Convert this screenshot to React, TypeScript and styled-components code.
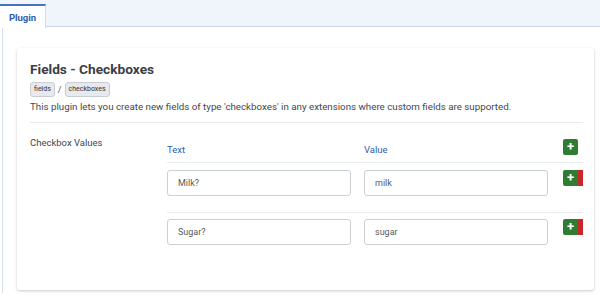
import styled, { createGlobalStyle } from 'styled-components'

let Global = createGlobalStyle`
    body {
        margin: 0;
        background: #fff;
        font-family: Roboto, "Liberation Sans", sans-serif;
        color: #3a3f44;
    }
`

let TabBar = styled.div`
    display: flex;
    height: 27px;
    padding-top: 4px;
    box-sizing: border-box;
    background: #f0f4fb;
    border-bottom: 1px solid #cbd6e8;
`

let Tab = styled.div`
    width: 46px;
    height: 24px;
    box-sizing: border-box;
    background: #fff;
    border-top: 2px solid #4673c4;
    border-right: 1px solid #d3dcea;
    display: flex;
    align-items: center;
    justify-content: center;
    font-size: 9.5px;
    font-weight: 700;
    color: #2c5cb0;
`

let Panel = styled.div`
    margin-left: 2px;
    border-left: 1px solid #d5deec;
    padding: 21px 6px 3px 14px;
`

let Card = styled.div`
    height: 242px;
    box-sizing: border-box;
    background: #fff;
    border-radius: 3px;
    box-shadow: 0 1px 3px rgba(0, 0, 0, 0.22);
    padding: 11px 11px 0 13px;
`

let Title = styled.h2`
    margin: 0;
    font-size: 13.7px;
    line-height: 20px;
    font-weight: 700;
    color: #3b4046;
`

let Badges = styled.div`
    display: flex;
    align-items: center;
    gap: 3px;
    margin-top: 3px;
    font-size: 9px;
    color: #555;
`

let Badge = styled.span`
    display: inline-block;
    padding: 2px 3px;
    line-height: 9px;
    background: #e6e9ed;
    border: 1px solid #c9cdd2;
    border-radius: 3px;
    color: #333;
    font-size: 7px;
`

let Desc = styled.p`
    margin: 4px 0 0;
    font-size: 9.75px;
    line-height: 12px;
    color: #42474d;
    padding-bottom: 9px;
    border-bottom: 1px solid #e7eaee;
`

let Field = styled.div`
    display: grid;
    grid-template-columns: 137px 1fr;
    margin-top: 12px;
`

let Label = styled.div`
    font-size: 9.5px;
    color: #42474d;
    padding-top: 2px;
`

let Row = styled.div<{ $line?: boolean; $top: number; $bottom: number }>`
    display: grid;
    grid-template-columns: 197px 199px 20px;
    align-items: center;
    padding-top: ${p => p.$top}px;
    padding-bottom: ${p => p.$bottom}px;
    border-bottom: ${p => (p.$line ? '1px solid #e9ecef' : 'none')};
`

let Head = styled.div`
    font-size: 9.5px;
    color: #2e5fae;
    padding-top: 4px;
`

let Input = styled.div`
    width: 184px;
    height: 26px;
    box-sizing: border-box;
    border: 1px solid #ccd0d4;
    border-radius: 3px;
    padding: 0 10px;
    display: flex;
    align-items: center;
    font-size: 9px;
    color: #555a60;
`

let BtnGroup = styled.div`
    display: flex;
    align-self: start;
`

let AddBtn = styled.div<{ $alone?: boolean }>`
    width: 15px;
    height: 16px;
    background: #2f7d32;
    border-radius: ${p => (p.$alone ? '2px' : '2px 0 0 2px')};
    color: #fff;
    font-size: 13px;
    font-weight: 700;
    line-height: 16px;
    text-align: center;
`

let RemoveStub = styled.div`
    width: 5px;
    height: 16px;
    background: #c9282b;
`

function Buttons({ remove }: { remove?: boolean }) {
    return (
        <BtnGroup>
            <AddBtn $alone={!remove}>+</AddBtn>
            {remove && <RemoveStub />}
        </BtnGroup>
    )
}

let rows = [
    { text: 'Milk?', value: 'milk' },
    { text: 'Sugar?', value: 'sugar' },
]

function App() {
    return (
        <>
            <Global />
            <TabBar>
                <Tab>Plugin</Tab>
            </TabBar>
            <Panel>
                <Card>
                    <Title>Fields - Checkboxes</Title>
                    <Badges>
                        <Badge>fields</Badge>/<Badge>checkboxes</Badge>
                    </Badges>
                    <Desc>
                        This plugin lets you create new fields of type 'checkboxes' in any extensions where custom fields are supported.
                    </Desc>
                    <Field>
                        <Label>Checkbox Values</Label>
                        <div>
                            <Row $line $top={4} $bottom={7}>
                                <Head>Text</Head>
                                <Head>Value</Head>
                                <Buttons />
                            </Row>
                            {rows.map((r, i) => (
                                <Row key={r.value} $line={i === 0} $top={i === 0 ? 7 : 6} $bottom={16}>
                                    <Input>{r.text}</Input>
                                    <Input>{r.value}</Input>
                                    <Buttons remove />
                                </Row>
                            ))}
                        </div>
                    </Field>
                </Card>
            </Panel>
        </>
    )
}

export default App
